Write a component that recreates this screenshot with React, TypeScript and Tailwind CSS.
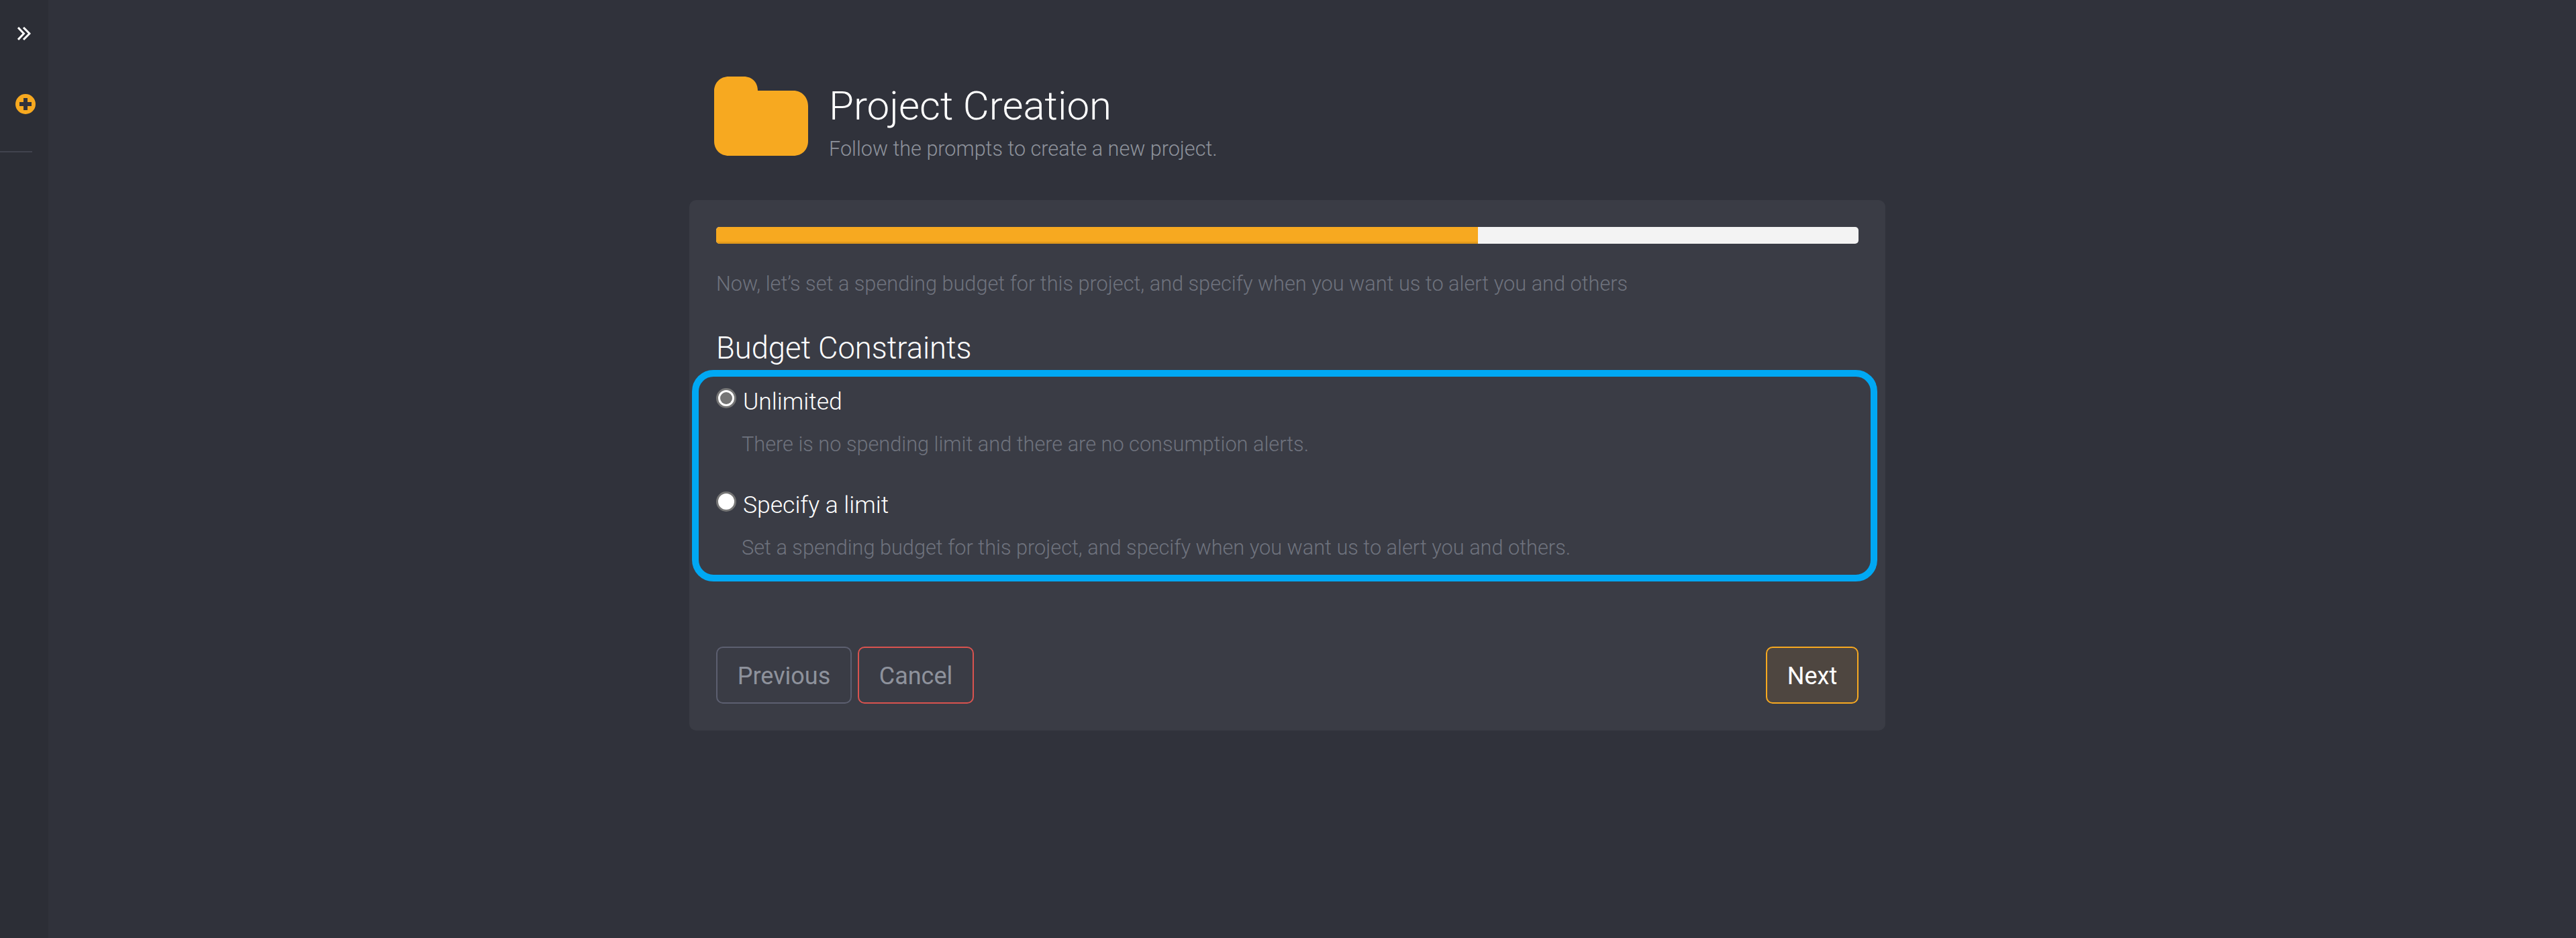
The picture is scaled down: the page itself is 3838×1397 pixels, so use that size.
import React from "react";

function Folder() {
  return (
    <svg width="140" height="118" viewBox="0 0 140 118" className="shrink-0">
      <path
        d="M22 0H44C57 0 65 9 65 21H118C131 21 140 31 140 44V96C140 109 131 118 118 118H22C9 118 0 109 0 96V22C0 9 9 0 22 0Z"
        fill="#f7a920"
      />
    </svg>
  );
}

function Option({ label, desc, checked }: { label: string; desc: string; checked?: boolean }) {
  return (
    <div className="flex flex-col">
      <div className="flex items-start">
        <span className="mt-[10px] flex h-[30px] w-[30px] shrink-0 items-center justify-center rounded-full border-[3px] border-[#757575] bg-white">
          {checked && <span className="h-[18px] w-[18px] rounded-full bg-[#757575]" />}
        </span>
        <span className="ml-[10px] mt-[8px] text-[35.5px] font-light leading-[44px] text-white">{label}</span>
      </div>
      <p className="ml-[38px] mt-[20px] text-[30.7px] font-light leading-[44px] text-[#6f737e]">{desc}</p>
    </div>
  );
}

export default function App() {
  return (
    <div className="flex h-[1397px] w-[3838px] overflow-hidden bg-[#30323b] font-['Roboto',sans-serif]">
      <aside className="flex h-full w-[72px] shrink-0 flex-col bg-[#2c2e36]">
        <svg width="20" height="20" viewBox="0 0 20 20" className="ml-[26px] mt-[40px]" fill="none" stroke="#fff" strokeWidth="3">
          <path d="M1 1L9.5 10L1 19" />
          <path d="M9 1L18 10L9 19" />
        </svg>
        <svg width="30" height="30" viewBox="0 0 30 30" className="ml-[23px] mt-[80px]">
          <circle cx="15" cy="15" r="15" fill="#f7a920" />
          <path d="M12 6H18V12H24V18H18V24H12V18H6V12H12Z" fill="#30323b" />
        </svg>
        <div className="mt-[55px] h-[2px] w-[48px] bg-[#41434e]" />
      </aside>
      <main className="ml-[955px] w-[1782px]">
        <header className="ml-[37px] mt-[114px] flex items-start">
          <Folder />
          <div className="ml-[31px] flex flex-col">
            <h1 className="mt-[8px] text-[60px] font-light leading-[72px] text-white">Project Creation</h1>
            <p className="mt-[8px] text-[30.6px] font-light leading-[40px] text-[#8e929c]">Follow the prompts to create a new project.</p>
          </div>
        </header>
        <section className="mt-[56px] h-[790px] rounded-[10px] bg-[#3a3c45] px-[40px] pt-[40px]">
          <div className="flex h-[25px] overflow-hidden rounded-[5px] bg-[#f3f3f3]">
            <div className="h-full w-[66.67%] border-b-[3px] border-[#e49b1c] bg-[#f7a920]" />
          </div>
          <p className="mt-[38px] text-[30.7px] font-light leading-[44px] text-[#6f737e]">
            Now, let’s set a spending budget for this project, and specify when you want us to alert you and others
          </p>
          <h2 className="mt-[48px] text-[45.3px] font-light leading-[52px] text-white">Budget Constraints</h2>
          <div className="-ml-[36px] -mr-[28px] mt-[6px] flex h-[315px] flex-col gap-[38px] rounded-[32px] border-[10px] border-[#00a8f3] pl-[26px] pt-[7px]">
            <Option checked label="Unlimited" desc="There is no spending limit and there are no consumption alerts." />
            <Option label="Specify a limit" desc="Set a spending budget for this project, and specify when you want us to alert you and others." />
          </div>
          <div className="mt-[97px] flex items-start">
            <button className="h-[85px] w-[202px] rounded-[10px] border-2 border-[#5c5f70] pt-[2px] text-[36px] text-[#8e929c]">Previous</button>
            <button className="ml-[9px] h-[85px] w-[173px] rounded-[10px] border-2 border-[#d9534f] pt-[2px] text-[36px] text-[#8e929c]">Cancel</button>
            <button className="ml-auto h-[85px] w-[138px] rounded-[10px] border-2 border-[#f7a920] bg-[#4e4640] pt-[2px] text-[36px] text-white">Next</button>
          </div>
        </section>
      </main>
    </div>
  );
}
